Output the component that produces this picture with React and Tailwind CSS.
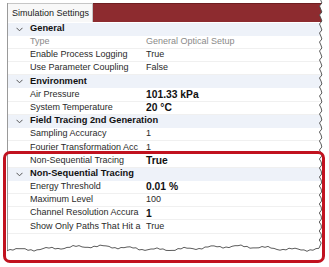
import React from "react";

const rows = [
  { cat: "General" },
  { label: "Type", value: "General Optical Setup", muted: true },
  { label: "Enable Process Logging", value: "True" },
  { label: "Use Parameter Coupling", value: "False" },
  { cat: "Environment" },
  { label: "Air Pressure", value: "101.33 kPa", bold: true },
  { label: "System Temperature", value: "20 °C", bold: true },
  { cat: "Field Tracing 2nd Generation" },
  { label: "Sampling Accuracy", value: "1" },
  { label: "Fourier Transformation Acc", value: "1" },
  { label: "Non-Sequential Tracing", value: "True", bold: true },
  { cat: "Non-Sequential Tracing" },
  { label: "Energy Threshold", value: "0.01 %", bold: true },
  { label: "Maximum Level", value: "100" },
  { label: "Channel Resolution Accura", value: "1", bold: true },
  { label: "Show Only Paths That Hit a", value: "True" },
];

// jagged torn-paper outline: right edge then bottom edge
const tornEdge = () => {
  const pts = [];
  for (let y = 0; y <= 244; y += 3) {
    const x = 320 + 1.4 * Math.sin(y * 0.7) + 0.8 * Math.sin(y * 2.1 + 1);
    pts.push([x, y]);
  }
  for (let x = 319; x >= 7; x -= 3) {
    const y =
      248 +
      1.6 * Math.sin(x * 0.045 + 0.5) +
      1.1 * Math.sin(x * 0.23) +
      0.6 * Math.sin(x * 0.9 + 2);
    pts.push([x, y]);
  }
  return pts;
};

const Chevron = () => (
  <svg width="7" height="5" viewBox="0 0 7 5" className="text-[#555]">
    <path d="M0.5 0.8 L3.5 3.8 L6.5 0.8" fill="none" stroke="currentColor" strokeWidth="1" />
  </svg>
);

const App = () => {
  const pts = tornEdge();
  const line = pts.map((p, i) => `${i ? "L" : "M"}${p[0].toFixed(1)} ${p[1].toFixed(1)}`).join(" ");
  const fill = `${line} L7 267 L329 267 L329 0 Z`;

  return (
    <div className="relative w-[329px] h-[267px] bg-white overflow-hidden font-['Liberation_Sans',Arial,sans-serif]">
      <div className="ml-[7px] mt-[3px] w-[316px] h-[250px] border-l border-[#9a9a9a]">
        {/* tab strip */}
        <div className="flex h-[19px]">
          <div className="w-[85px] bg-[#f8f8f8] border-t border-r border-[#c6c6c6] text-[9px] text-[#1a1a1a] pl-[4px] pt-[3px]">
            Simulation Settings
          </div>
          <div className="flex-1 bg-[#8d2b2f] border-t border-[#6e1f22]" />
        </div>

        {/* property grid */}
        <div className="pt-[0.5px]">
          {rows.map((r, i) =>
            r.cat ? (
              <div key={i} className="flex items-center h-[13.2px] bg-[#eef2f9]">
                <div className="w-[22px] flex justify-center pl-[1px]">
                  <Chevron />
                </div>
                <span className="text-[9.3px] font-bold text-[#111]">{r.cat}</span>
              </div>
            ) : (
              <div key={i} className="flex items-center h-[13.2px] border-b border-[#f0f0f0]">
                <div className="w-[22px]" />
                <div
                  className={`w-[115px] whitespace-nowrap text-[9px] ${
                    r.muted ? "text-[#8a8a8a]" : "text-[#2a2a2a]"
                  }`}
                >
                  {r.label}
                </div>
                <div
                  className={`pl-[1px] whitespace-nowrap ${
                    r.bold
                      ? "text-[10.3px] font-bold text-[#111]"
                      : r.muted
                      ? "text-[9px] text-[#8a8a8a]"
                      : "text-[9px] text-[#2a2a2a]"
                  }`}
                >
                  {r.value}
                </div>
              </div>
            )
          )}
        </div>
      </div>

      {/* torn paper edge */}
      <svg className="absolute inset-0" width="329" height="267" viewBox="0 0 329 267">
        <path d={fill} fill="#ffffff" />
        <path d={line} fill="none" stroke="#4a4a4a" strokeWidth="0.9" />
      </svg>

      {/* highlight frame */}
      <div className="absolute left-[3px] top-[151px] w-[322px] h-[112px] border-[3px] border-[#c1121f] rounded-[7px]" />
    </div>
  );
};

export default App;
